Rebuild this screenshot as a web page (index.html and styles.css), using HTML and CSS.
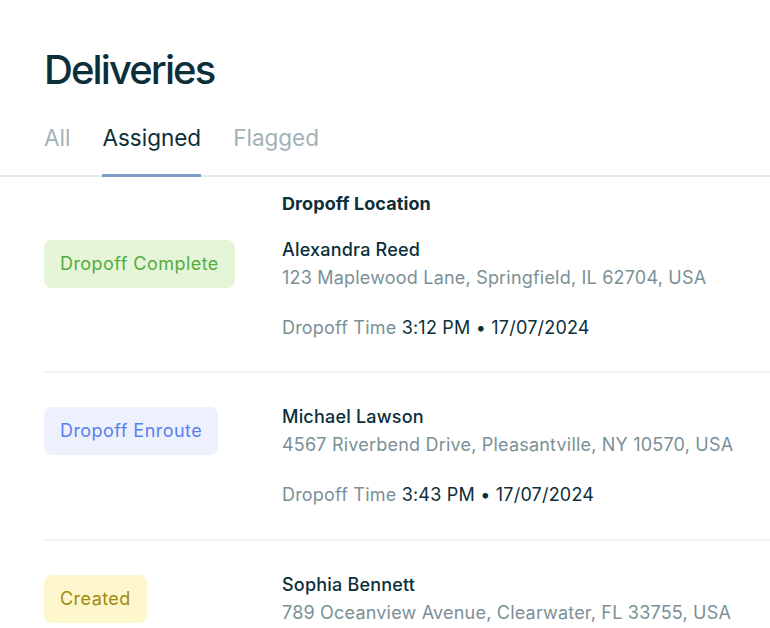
FILE: index.html
```html
<!DOCTYPE html>
<html lang="en">
<head>
<meta charset="utf-8">
<title>Deliveries</title>
<link rel="stylesheet" href="styles.css">
</head>
<body>
<div class="page">
  <h1 class="title">Deliveries</h1>
  <nav class="tabs">
    <span class="tab">All</span>
    <span class="tab active">Assigned</span>
    <span class="tab">Flagged</span>
  </nav>
  <div class="list">
    <div class="col-head">
      <div></div>
      <div class="head-label">Dropoff Location</div>
    </div>
    <div class="row first">
      <div class="badge-cell"><span class="badge complete">Dropoff Complete</span></div>
      <div class="info">
        <div class="name">Alexandra Reed</div>
        <div class="addr">123 Maplewood Lane, Springfield, IL 62704, USA</div>
      </div>
      <div></div>
      <div class="time"><span class="label">Dropoff Time</span> 3:12 PM • 17/07/2024</div>
    </div>
    <div class="row">
      <div class="badge-cell"><span class="badge enroute">Dropoff Enroute</span></div>
      <div class="info">
        <div class="name">Michael Lawson</div>
        <div class="addr">4567 Riverbend Drive, Pleasantville, NY 10570, USA</div>
      </div>
      <div></div>
      <div class="time"><span class="label">Dropoff Time</span> 3:43 PM • 17/07/2024</div>
    </div>
    <div class="row">
      <div class="badge-cell"><span class="badge created">Created</span></div>
      <div class="info">
        <div class="name">Sophia Bennett</div>
        <div class="addr">789 Oceanview Avenue, Clearwater, FL 33755, USA</div>
      </div>
    </div>
  </div>
</div>
</body>
</html>
```
FILE: styles.css
```css
* { box-sizing: border-box; }
html, body { margin: 0; padding: 0; background: #ffffff; }
body {
  font-family: Inter, "Noto Sans", sans-serif;
  color: #0c2f3a;
  overflow: hidden;
}
.page { width: 770px; }
.title {
  margin: 0;
  padding: 46px 0 0 44px;
  font-size: 40px;
  line-height: 48px;
  font-weight: 500;
  letter-spacing: -1.9px;
  color: #0c2f3a;
}
.tabs {
  display: flex;
  gap: 32px;
  padding: 28px 0 0 44px;
  border-bottom: 2px solid #e6e9ea;
}
.tab {
  font-size: 22.5px;
  line-height: 32px;
  padding-bottom: 20px;
  color: #a2b2b7;
  border-bottom: 3px solid transparent;
  margin-bottom: -2px;
  letter-spacing: 0;
}
.tab.active {
  color: #0c2f3a;
  border-bottom-color: #7b9cc8;
}
.list { padding-left: 44px; }
.col-head {
  display: grid;
  grid-template-columns: 238px 1fr;
  padding-top: 13px;
}
.head-label {
  font-size: 18px;
  line-height: 28px;
  font-weight: 700;
  letter-spacing: 0.1px;
  color: #0c2f3a;
}
.row {
  display: grid;
  grid-template-columns: 238px 1fr;
  row-gap: 22px;
  padding: 30px 0 30px;
  border-top: 2px solid #f1f1f1;
}
.row.first { border-top: none; padding-top: 18px; padding-bottom: 29px; }
.badge-cell { display: flex; align-items: center; }
.badge {
  display: inline-block;
  font-size: 18px;
  line-height: 28px;
  padding: 10px 16px;
  border-radius: 8px;
  letter-spacing: 0.45px;
}
.badge.complete { background: #e6f4d7; color: #54ad3f; }
.badge.enroute { background: #edf1fd; color: #5a7ff0; }
.badge.created { background: #fef7cd; color: #a08a0c; }
.name {
  font-size: 18px;
  line-height: 28px;
  font-weight: 500;
  letter-spacing: 0.2px;
  color: #0c2f3a;
}
.addr, .time {
  font-size: 18px;
  line-height: 28px;
  letter-spacing: 0.2px;
  color: #7b9096;
}
.time { color: #0c2f3a; }
.time .label { color: #7b9096; }
```
